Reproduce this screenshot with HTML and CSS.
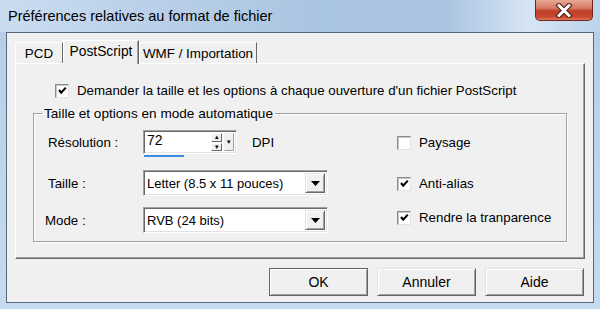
FILE: index.html
```html
<!DOCTYPE html>
<html lang="fr">
<head>
    <meta charset="UTF-8">
    <title>Préférences relatives au format de fichier</title>
    <link rel="stylesheet" href="styles.css">
</head>
<body>
    <div class="window">
        <div class="titlebar">
            <span class="title">Préférences relatives au format de fichier</span>
            <span class="close">
                <svg width="18" height="15" viewBox="0 0 18 15">
                    <path d="M4 2.5 L14 12.5 M14 2.5 L4 12.5" stroke="#4a1a12" stroke-width="5" stroke-linecap="square"/>
                    <path d="M4 2.5 L14 12.5 M14 2.5 L4 12.5" stroke="#fff" stroke-width="3" stroke-linecap="square"/>
                </svg>
            </span>
        </div>

        <div class="client">
            <div class="tabs">
                <span class="tab">PCD</span>
                <span class="tab active">PostScript</span>
                <span class="tab">WMF / Importation</span>
            </div>

            <div class="panel">
                <div class="check top-check">
                    <span class="box"><svg width="11" height="11" viewBox="0 0 11 11"><path d="M2 5 L4.2 7.6 L8.8 2.6" fill="none" stroke="#000" stroke-width="2.1"/></svg></span>
                    Demander la taille et les options à chaque ouverture d'un fichier PostScript
                </div>

                <fieldset class="group">
                    <legend>Taille et options en mode automatique</legend>
                    <div class="fields">
                        <div class="left">
                            <div class="row r1">
                                <span class="lbl">Résolution :</span>
                                <div class="spin">
                                    <span class="spin_val">72</span>
                                    <span class="spin_btns">
                                        <span class="sbtn">&#9652;</span>
                                        <span class="sbtn">&#9662;</span>
                                    </span>
                                    <span class="spin_drop">&#9662;</span>
                                    <span class="spin_bar"></span>
                                </div>
                                <span class="unit">DPI</span>
                            </div>
                            <div class="row r2">
                                <span class="lbl">Taille :</span>
                                <div class="select">
                                    <span class="select_val">Letter (8.5 x 11 pouces)</span>
                                    <span class="drop"><svg width="9" height="5" viewBox="0 0 9 5"><path d="M0 0 H9 L4.5 5 Z" fill="#000"/></svg></span>
                                </div>
                            </div>
                            <div class="row r3">
                                <span class="lbl">Mode :</span>
                                <div class="select">
                                    <span class="select_val">RVB (24 bits)</span>
                                    <span class="drop"><svg width="9" height="5" viewBox="0 0 9 5"><path d="M0 0 H9 L4.5 5 Z" fill="#000"/></svg></span>
                                </div>
                            </div>
                        </div>

                        <div class="right">
                            <div class="check c1">
                                <span class="box"></span>
                                Paysage
                            </div>
                            <div class="check c2">
                                <span class="box"><svg width="11" height="11" viewBox="0 0 11 11"><path d="M2 5 L4.2 7.6 L8.8 2.6" fill="none" stroke="#000" stroke-width="2.1"/></svg></span>
                                Anti-alias
                            </div>
                            <div class="check c3">
                                <span class="box"><svg width="11" height="11" viewBox="0 0 11 11"><path d="M2 5 L4.2 7.6 L8.8 2.6" fill="none" stroke="#000" stroke-width="2.1"/></svg></span>
                                Rendre la tranparence
                            </div>
                        </div>
                    </div>
                </fieldset>
            </div>

            <div class="buttons">
                <span class="btn default">OK</span>
                <span class="btn">Annuler</span>
                <span class="btn">Aide</span>
            </div>
        </div>
    </div>
</body>
</html>
```

FILE: styles.css
```css
body{
    margin: 0;
    background-color: #bcd3ea;
}

*{
    box-sizing: border-box;
}

.window{
    width: 600px;
    height: 309px;
    overflow: hidden;
    background: linear-gradient(to bottom, #b6cde6, #c6dbef);
    font-family: "Liberation Sans", Arial, sans-serif;
    font-size: 13.3px;
    color: #000;
}

.titlebar{
    height: 32px;
    display: flex;
    justify-content: space-between;
    align-items: flex-start;
    background: linear-gradient(to right, #cadcf0 0%, #bad0e8 25%, #a9c4e1 55%, #acc6e2 75%, #d6e5f4 88%, #bcd3ea 100%);
}

.title{
    font-size: 14.5px;
    padding: 8px 0 0 8px;
    color: #000;
}

.close{
    width: 58px;
    height: 21px;
    margin-right: 7px;
    display: flex;
    align-items: center;
    justify-content: center;
    border: 1px solid #6e261b;
    border-top: none;
    border-radius: 0 0 5px 5px;
    background: linear-gradient(to bottom, #e7a796 0%, #d67a64 40%, #c0402a 55%, #c8482f 85%, #e07a5c 100%);
}

.client{
    margin: 0 6px 0 6px;
    height: 271px;
    border: 1px solid #56697f;
    background-color: #f0f0f0;
    padding: 7px 8px 0 8px;
}

.tabs{
    display: flex;
    align-items: flex-end;
    height: 23px;
}

.tab{
    height: 21px;
    padding: 3px 0 0 0;
    text-align: center;
    background-color: #f0f0f0;
    border: 1px solid;
    border-color: #fff #696969 #f0f0f0 #fff;
    border-bottom: none;
    font-size: 13.4px;
}

.tab:nth-child(1){
    width: 48px;
}

.tab:nth-child(3){
    width: 118px;
}

.tab.active{
    width: 76px;
    height: 24px;
    margin-bottom: -1px;
    position: relative;
    z-index: 1;
    font-size: 13.8px;
    box-shadow: inset -1px 0 0 #a0a0a0;
}

.panel{
    height: 196px;
    border: 1px solid;
    border-color: #fff #696969 #696969 #fff;
    box-shadow: inset -1px -1px 0 #a0a0a0;
    padding: 19px 17px 0 17px;
}

.check{
    display: flex;
    align-items: center;
    height: 15px;
}

.box{
    width: 14px;
    height: 14px;
    margin-right: 8px;
    background-color: #fff;
    border: 1px solid;
    border-color: #8a8a8a #e3e3e3 #e3e3e3 #8a8a8a;
    box-shadow: inset 1px 1px 0 #c8c8c8;
    display: flex;
    align-items: center;
    justify-content: center;
}

.top-check{
    margin-left: 22px;
}

.group{
    margin: 8px 0 0 0;
    padding: 0;
    height: 136px;
    border: 1px solid #a0a0a0;
    box-shadow: 1px 1px 0 #fff, inset 1px 1px 0 #fff;
}

.group legend{
    margin-left: 8px;
    padding: 0 2px;
    font-size: 13.6px;
}

.fields{
    display: flex;
    padding: 7px 0 0 14px;
}

.left{
    width: 325px;
}

.row{
    display: flex;
    align-items: center;
}

.r1{
    height: 28px;
}

.r2{
    height: 26px;
    margin-top: 14px;
}

.r3{
    height: 26px;
    margin-top: 11px;
}

.lbl{
    width: 95px;
}

.r3 .lbl{
    margin-left: -3px;
    width: 98px;
}

.spin{
    width: 94px;
    height: 24px;
    align-self: flex-start;
    margin-top: 2px;
    border: 1px solid;
    border-color: #a0a0a0 #fff #fff #a0a0a0;
    box-shadow: inset 1px 1px 0 #696969, inset -1px -1px 0 #e3e3e3;
    background-color: #fff;
    display: flex;
    padding: 2px;
    position: relative;
}

.spin_val{
    flex: 1;
    padding: 0 0 0 1px;
    line-height: 14px;
    font-size: 14px;
}

.spin_btns{
    display: flex;
    flex-direction: column;
    width: 11px;
    gap: 1px;
    margin-right: 2px;
}

.sbtn, .spin_drop{
    flex: 1;
    background-color: #f0f0f0;
    border: 1px solid;
    border-color: #fff #696969 #696969 #fff;
    font-size: 7px;
    line-height: 6px;
    text-align: center;
    overflow: hidden;
}

.spin_drop{
    flex: none;
    width: 10px;
    line-height: 16px;
    border-color: #f0f0f0 #a0a0a0 #a0a0a0 #f0f0f0;
}

.spin_bar{
    position: absolute;
    left: 0;
    bottom: -4px;
    width: 40px;
    height: 2px;
    background-color: #3a8de0;
}

.unit{
    margin-left: 15px;
}

.select{
    width: 185px;
    height: 26px;
    border: 1px solid;
    border-color: #a0a0a0 #fff #fff #a0a0a0;
    box-shadow: inset 1px 1px 0 #696969, inset -1px -1px 0 #e3e3e3;
    background-color: #fff;
    display: flex;
    align-items: center;
    padding: 2px;
}

.select_val{
    flex: 1;
    padding-left: 1px;
    font-size: 13px;
}

.drop{
    width: 20px;
    height: 20px;
    background-color: #f0f0f0;
    border: 1px solid;
    border-color: #e3e3e3 #696969 #696969 #e3e3e3;
    box-shadow: inset 1px 1px 0 #fff, inset -1px -1px 0 #a0a0a0;
    display: flex;
    align-items: center;
    justify-content: center;
}

.right{
    padding-left: 24px;
}

.c1{
    margin-top: 7px;
}

.c2{
    margin-top: 26px;
}

.c3{
    margin-top: 19px;
}

.buttons{
    display: flex;
    justify-content: flex-end;
    gap: 9px;
    margin-top: 9px;
    padding-right: 1px;
}

.btn{
    width: 99px;
    height: 28px;
    display: flex;
    align-items: center;
    justify-content: center;
    font-size: 14px;
    background-color: #f0f0f0;
    border: 1px solid;
    border-color: #e3e3e3 #646464 #646464 #e3e3e3;
    box-shadow: inset 1px 1px 0 #fff, inset -1px -1px 0 #a0a0a0;
}

.btn.default{
    border-color: #646464;
}
```
